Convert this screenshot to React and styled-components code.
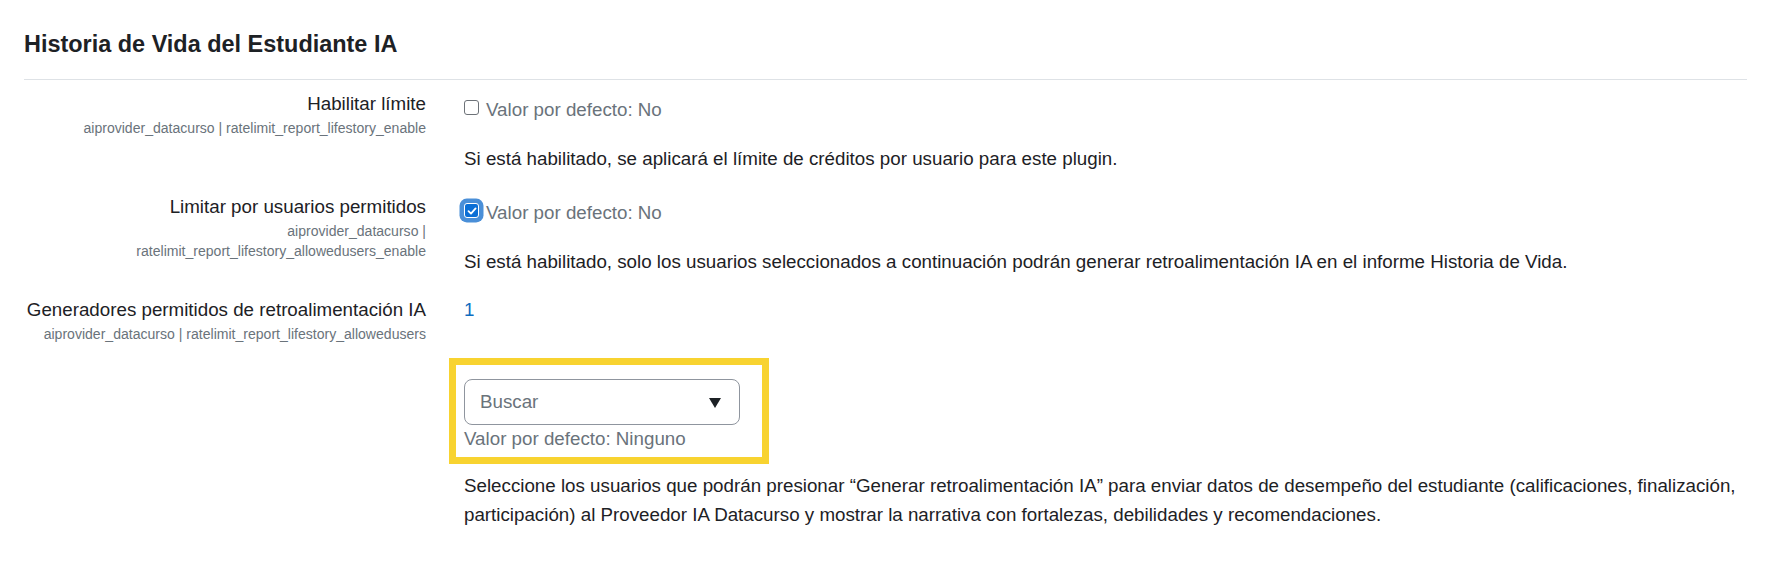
import React from "react";
import styled, { createGlobalStyle } from "styled-components";

const GlobalStyle = createGlobalStyle`
  html, body {
    margin: 0;
    padding: 0;
    background: #ffffff;
  }
  body {
    font-family: "Liberation Sans", Arial, sans-serif;
    font-size: 18.75px;
    line-height: 1.5;
    color: #1d2125;
  }
`;

const Page = styled.div`
  padding: 30px 26px 0 24px;
`;

const Heading = styled.h3`
  margin: 0;
  font-size: 23.44px;
  font-weight: 700;
  line-height: 1.2;
  color: #1d2125;
`;

const Divider = styled.hr`
  margin: 21px 0 0;
  border: 0;
  border-top: 1px solid #dee2e6;
`;

const Settings = styled.div`
  padding-top: 9.5px;
`;

const SettingRow = styled.div`
  display: grid;
  grid-template-columns: 402px 1fr;
  column-gap: 38px;
  margin-bottom: 19px;
`;

const LabelCol = styled.div`
  text-align: right;
`;

const LabelTitle = styled.div`
  font-size: 18.75px;
  line-height: 28.125px;
  color: #1d2125;
`;

const Shortname = styled.div`
  font-size: 14.06px;
  line-height: 20.5px;
  color: #6a737b;
`;

const ContentCol = styled.div`
  padding-top: ${(p) => p.$offset || 0}px;
  min-width: 0;
`;

const CheckLine = styled.div`
  display: flex;
  align-items: center;
  height: 28.125px;
`;

const CheckBox = styled.span`
  box-sizing: border-box;
  width: 15px;
  height: 15px;
  margin: 0 7px 0 0;
  border-radius: 3px;
  flex: none;
  border: ${(p) => (p.$checked ? "1.5px solid #ffffff" : "1.5px solid #6d7278")};
  background: ${(p) => (p.$checked ? "#0b6fd6" : "#ffffff")};
  box-shadow: ${(p) => (p.$checked ? "0 0 0 4.5px #4a8fd8" : "none")};
  display: flex;
  align-items: center;
  justify-content: center;
  transform: translateY(-2px);
`;

const DefaultInfo = styled.span`
  color: #6a737b;
  font-size: 18.75px;
  line-height: 28.125px;
`;

const Description = styled.div`
  margin-top: ${(p) => p.$gap}px;
  line-height: 28.9px;
  color: #1d2125;
`;

const UserCount = styled.a`
  display: block;
  color: #0f6cbf;
  text-decoration: none;
  line-height: 28.125px;
`;

const Highlight = styled.div`
  width: fit-content;
  margin: 34.5px 0 0 -15px;
  border: 7px solid #f8d330;
  padding: 14px 22px 3.5px 8px;
`;

const SearchSelect = styled.div`
  box-sizing: border-box;
  width: 276px;
  height: 46px;
  border: 1px solid #8f959e;
  border-radius: 8px;
  padding: 0 18px 0 15px;
  display: flex;
  align-items: center;
  justify-content: space-between;
  color: #6a737b;
  font-size: 18.75px;
`;

const Caret = () => (
  <svg width="12" height="11" viewBox="0 0 12 11">
    <path d="M0 1 L12 1 L6 11 Z" fill="#1d2125" />
  </svg>
);

const Check = () => (
  <svg width="10" height="10" viewBox="0 0 10 10">
    <path
      d="M1.5 5.2 L4 7.6 L8.6 2.4"
      stroke="#ffffff"
      strokeWidth="1.8"
      fill="none"
      strokeLinecap="round"
      strokeLinejoin="round"
    />
  </svg>
);

const CheckSetting = ({ title, names, checked, text }) => (
  <SettingRow>
    <LabelCol>
      <LabelTitle>{title}</LabelTitle>
      {names.map((n) => (
        <Shortname key={n}>{n}</Shortname>
      ))}
    </LabelCol>
    <ContentCol $offset={6}>
      <CheckLine>
        <CheckBox $checked={checked}>{checked && <Check />}</CheckBox>
        <DefaultInfo>Valor por defecto: No</DefaultInfo>
      </CheckLine>
      <Description $gap={21}>{text}</Description>
    </ContentCol>
  </SettingRow>
);

export default function App() {
  return (
    <>
      <GlobalStyle />
      <Page>
        <Heading>Historia de Vida del Estudiante IA</Heading>
        <Divider />
        <Settings>
          <CheckSetting
            title="Habilitar límite"
            names={["aiprovider_datacurso | ratelimit_report_lifestory_enable"]}
            text="Si está habilitado, se aplicará el límite de créditos por usuario para este plugin."
          />
          <CheckSetting
            title="Limitar por usuarios permitidos"
            names={["aiprovider_datacurso |", "ratelimit_report_lifestory_allowedusers_enable"]}
            checked
            text="Si está habilitado, solo los usuarios seleccionados a continuación podrán generar retroalimentación IA en el informe Historia de Vida."
          />
          <SettingRow>
            <LabelCol>
              <LabelTitle>Generadores permitidos de retroalimentación IA</LabelTitle>
              <Shortname>aiprovider_datacurso | ratelimit_report_lifestory_allowedusers</Shortname>
            </LabelCol>
            <ContentCol>
              <UserCount href="#">1</UserCount>
              <Highlight>
                <SearchSelect>
                  <span>Buscar</span>
                  <Caret />
                </SearchSelect>
                <DefaultInfo>Valor por defecto: Ninguno</DefaultInfo>
              </Highlight>
              <Description $gap={8}>
                Seleccione los usuarios que podrán presionar “Generar retroalimentación IA” para
                enviar datos de desempeño del estudiante (calificaciones, finalización,
                participación) al Proveedor IA Datacurso y mostrar la narrativa con fortalezas,
                debilidades y recomendaciones.
              </Description>
            </ContentCol>
          </SettingRow>
        </Settings>
      </Page>
    </>
  );
}
